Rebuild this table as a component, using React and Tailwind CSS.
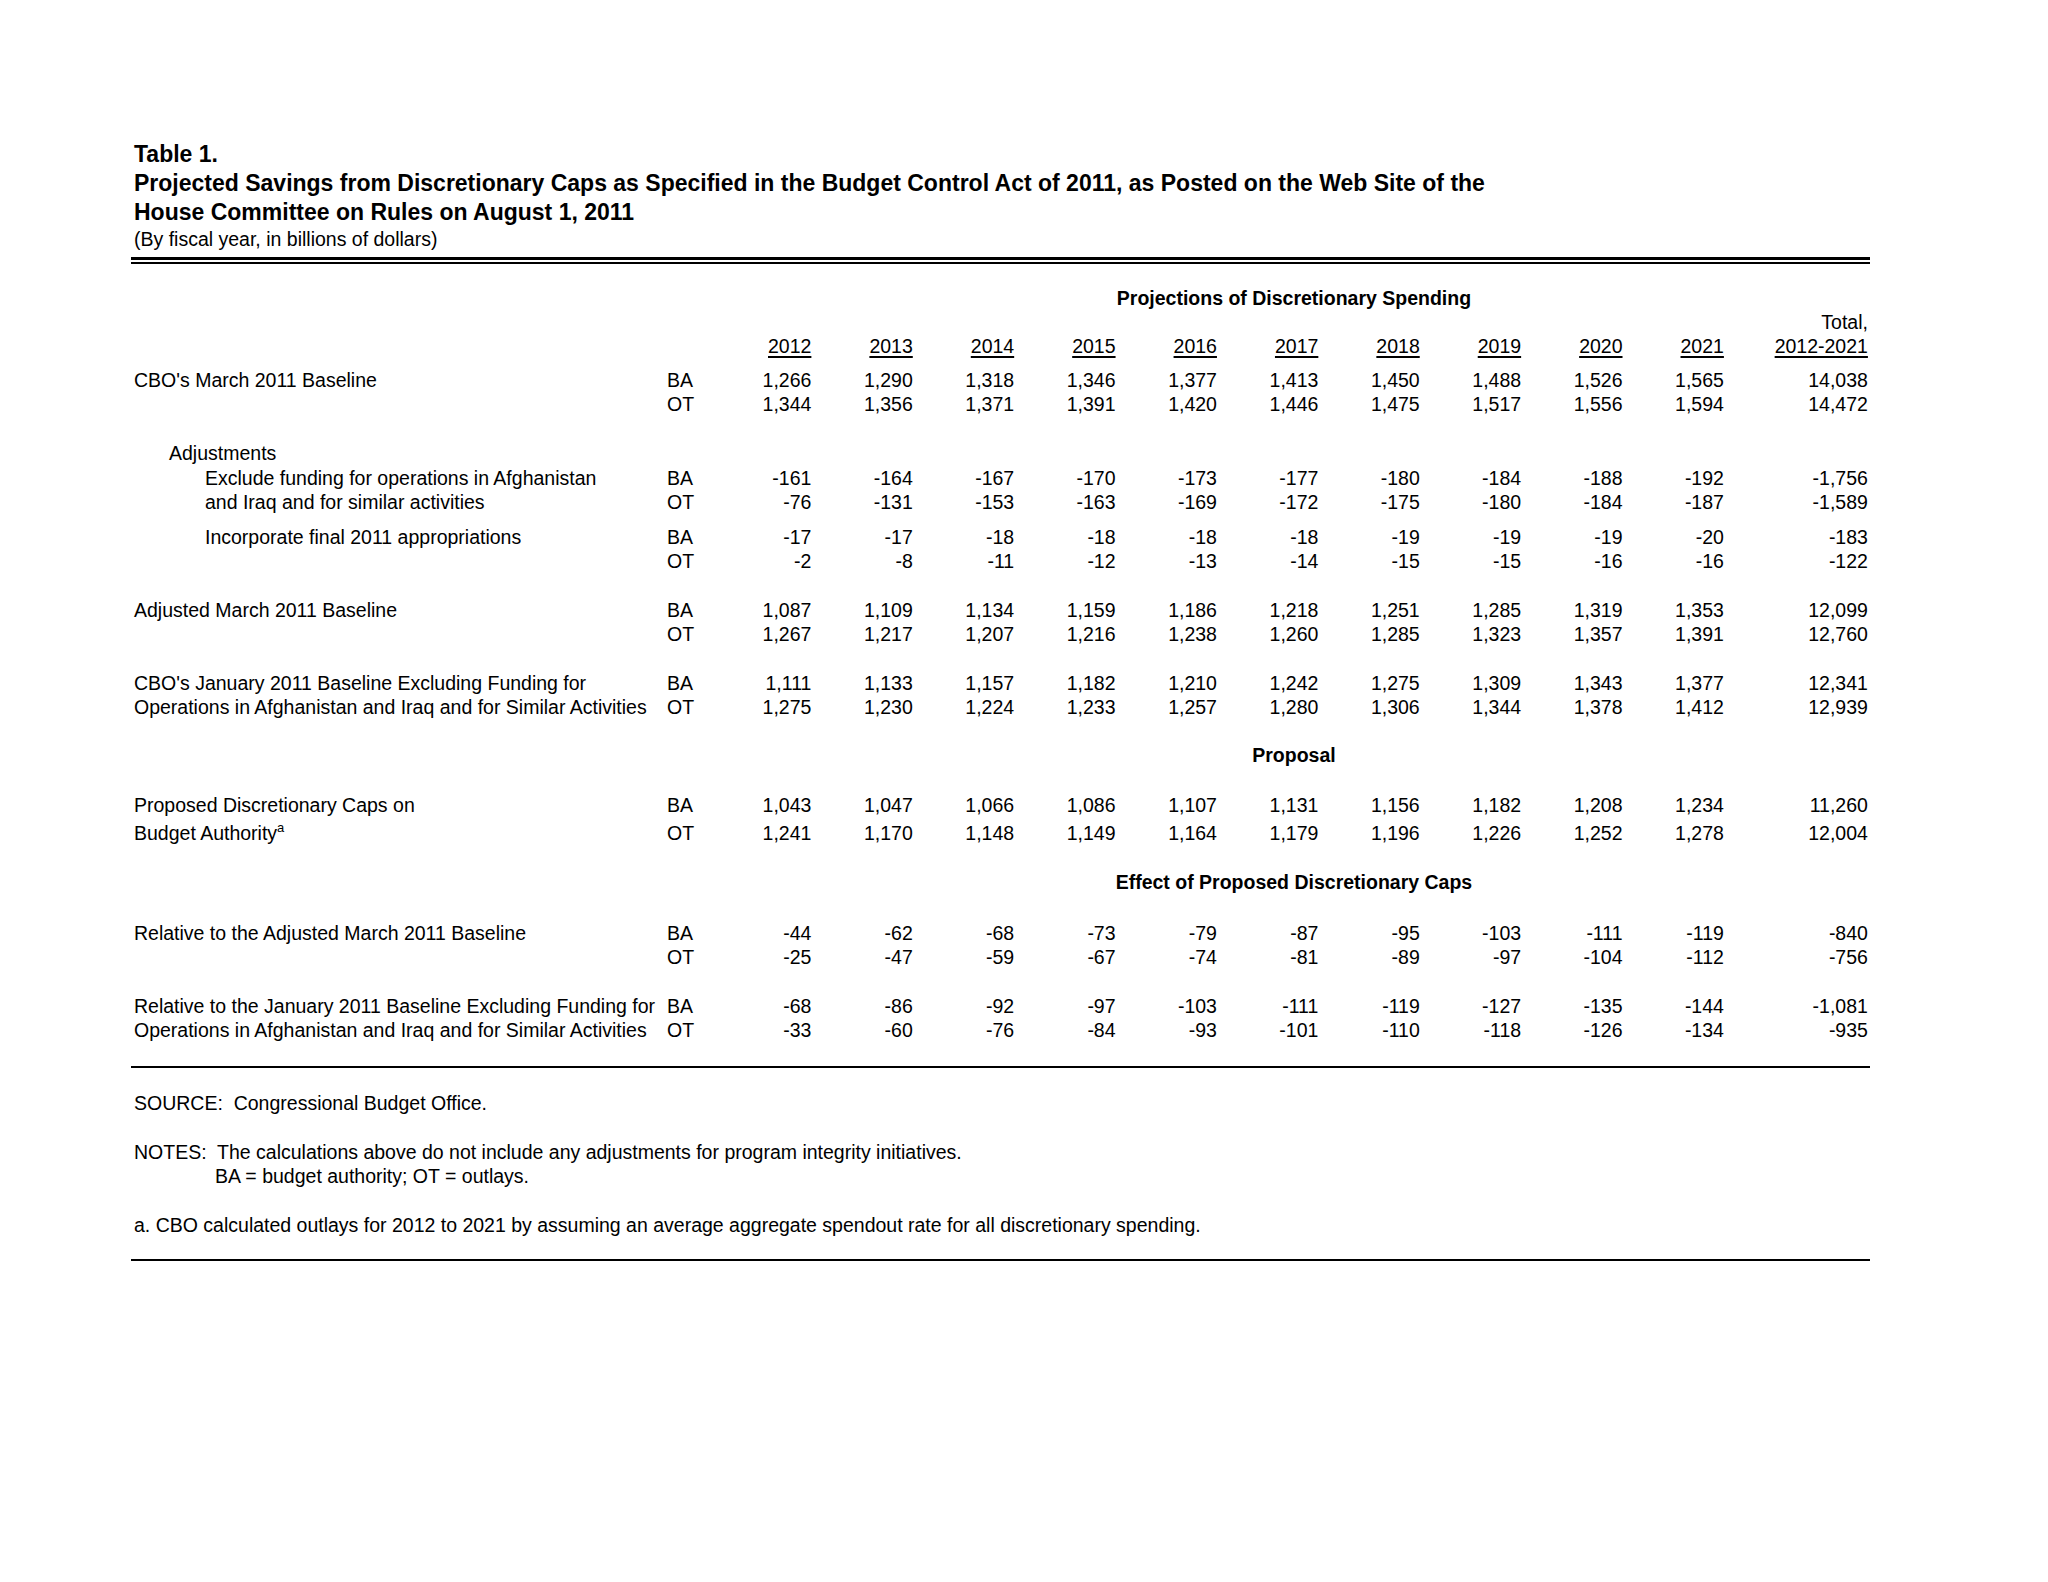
import React from 'react';

const years = ['2012', '2013', '2014', '2015', '2016', '2017', '2018', '2019', '2020', '2021'];

// each line: [label, tag, values..., total]
const lines = [
  { mt: 'mt-[10px]', label: "CBO's March 2011 Baseline", tag: 'BA', vals: ['1,266', '1,290', '1,318', '1,346', '1,377', '1,413', '1,450', '1,488', '1,526', '1,565', '14,038'] },
  { mt: '', label: '', tag: 'OT', vals: ['1,344', '1,356', '1,371', '1,391', '1,420', '1,446', '1,475', '1,517', '1,556', '1,594', '14,472'] },
  { mt: 'mt-[25px]', label: 'Adjustments', indent: 'pl-[35px]', tag: '', vals: [] },
  { mt: 'mt-px', label: 'Exclude funding for operations in Afghanistan', indent: 'pl-[71px]', tag: 'BA', vals: ['-161', '-164', '-167', '-170', '-173', '-177', '-180', '-184', '-188', '-192', '-1,756'] },
  { mt: '', label: 'and Iraq and for similar activities', indent: 'pl-[71px]', tag: 'OT', vals: ['-76', '-131', '-153', '-163', '-169', '-172', '-175', '-180', '-184', '-187', '-1,589'] },
  { mt: 'mt-[11px]', label: 'Incorporate final 2011 appropriations', indent: 'pl-[71px]', tag: 'BA', vals: ['-17', '-17', '-18', '-18', '-18', '-18', '-19', '-19', '-19', '-20', '-183'] },
  { mt: '', label: '', tag: 'OT', vals: ['-2', '-8', '-11', '-12', '-13', '-14', '-15', '-15', '-16', '-16', '-122'] },
  { mt: 'mt-[25px]', label: 'Adjusted March 2011 Baseline', tag: 'BA', vals: ['1,087', '1,109', '1,134', '1,159', '1,186', '1,218', '1,251', '1,285', '1,319', '1,353', '12,099'] },
  { mt: '', label: '', tag: 'OT', vals: ['1,267', '1,217', '1,207', '1,216', '1,238', '1,260', '1,285', '1,323', '1,357', '1,391', '12,760'] },
  { mt: 'mt-[25px]', label: "CBO's January 2011 Baseline Excluding Funding for", tag: 'BA', vals: ['1,111', '1,133', '1,157', '1,182', '1,210', '1,242', '1,275', '1,309', '1,343', '1,377', '12,341'] },
  { mt: '', label: 'Operations in Afghanistan and Iraq and for Similar Activities', tag: 'OT', vals: ['1,275', '1,230', '1,224', '1,233', '1,257', '1,280', '1,306', '1,344', '1,378', '1,412', '12,939'] },
  { mt: 'mt-[24px]', heading: 'Proposal' },
  { mt: 'mt-[26px]', label: 'Proposed Discretionary Caps on', tag: 'BA', vals: ['1,043', '1,047', '1,066', '1,086', '1,107', '1,131', '1,156', '1,182', '1,208', '1,234', '11,260'] },
  { mt: 'mt-[4px]', label: 'Budget Authority', sup: 'a', tag: 'OT', vals: ['1,241', '1,170', '1,148', '1,149', '1,164', '1,179', '1,196', '1,226', '1,252', '1,278', '12,004'] },
  { mt: 'mt-[25px]', heading: 'Effect of Proposed Discretionary Caps' },
  { mt: 'mt-[27px]', label: 'Relative to the Adjusted March 2011 Baseline', tag: 'BA', vals: ['-44', '-62', '-68', '-73', '-79', '-87', '-95', '-103', '-111', '-119', '-840'] },
  { mt: '', label: '', tag: 'OT', vals: ['-25', '-47', '-59', '-67', '-74', '-81', '-89', '-97', '-104', '-112', '-756'] },
  { mt: 'mt-[25px]', label: 'Relative to the January 2011 Baseline Excluding Funding for', tag: 'BA', vals: ['-68', '-86', '-92', '-97', '-103', '-111', '-119', '-127', '-135', '-144', '-1,081'] },
  { mt: '', label: 'Operations in Afghanistan and Iraq and for Similar Activities', tag: 'OT', vals: ['-33', '-60', '-76', '-84', '-93', '-101', '-110', '-118', '-126', '-134', '-935'] },
];

const gridCols = 'grid grid-cols-[533px_43px_repeat(10,101.4px)_144px] h-[24px] leading-[24px]';

const Line = ({ line }) => {
  if (line.heading) {
    return (
      <div className={`${gridCols} ${line.mt}`}>
        <div className="col-start-3 col-end-14 pl-[10px] text-center font-bold">{line.heading}</div>
      </div>
    );
  }
  return (
    <div className={`${gridCols} ${line.mt}`}>
      <div className={`whitespace-nowrap ${line.indent || ''}`}>
        {line.label}
        {line.sup && <sup className="text-[13px] relative -top-[1px] align-super leading-none">{line.sup}</sup>}
      </div>
      <div>{line.tag}</div>
      {line.vals.map((v, i) => (
        <div key={i} className="text-right">{v}</div>
      ))}
    </div>
  );
};

const App = () => {
  return (
    <div className="min-h-[1582px] w-full bg-white text-black font-['Liberation_Sans',Arial,sans-serif]">
      <div className="ml-[131px] w-[1739px] pt-[140px]">
        {/* Title */}
        <div className="pl-[3px]">
          <div className="text-[23px] leading-[29px] font-bold">
            <div>Table 1.</div>
            <div>Projected Savings from Discretionary Caps as Specified in the Budget Control Act of 2011, as Posted on the Web Site of the</div>
            <div>House Committee on Rules on August 1, 2011</div>
          </div>
          <div className="text-[19.5px] leading-[24px]">(By fiscal year, in billions of dollars)</div>
        </div>
        <div className="mt-[6px] h-[3px] bg-black" />
        <div className="mt-[2px] h-[2px] bg-black" />

        {/* Table */}
        <div className="pl-[3px] text-[19.5px]">
          <div className={`${gridCols} mt-[22px]`}>
            <div className="col-start-3 col-end-14 pl-[10px] text-center font-bold">Projections of Discretionary Spending</div>
          </div>
          <div className={gridCols}>
            <div className="col-start-13 text-right">Total,</div>
          </div>
          <div className={gridCols}>
            <div />
            <div />
            {years.map((y) => (
              <div key={y} className="text-right">
                <span className="underline decoration-[2px] underline-offset-[3px]">{y}</span>
              </div>
            ))}
            <div className="text-right">
              <span className="underline decoration-[2px] underline-offset-[3px]">2012-2021</span>
            </div>
          </div>
          {lines.map((line, i) => (
            <Line key={i} line={line} />
          ))}
        </div>

        <div className="mt-[24px] h-[2px] bg-black" />

        {/* Notes */}
        <div className="pl-[3px] text-[19.5px] leading-[24px]">
          <div className="mt-[23px] whitespace-pre">SOURCE:  Congressional Budget Office.</div>
          <div className="mt-[25px] whitespace-pre">NOTES:  The calculations above do not include any adjustments for program integrity initiatives.</div>
          <div className="pl-[81px]">BA = budget authority; OT = outlays.</div>
          <div className="mt-[25px]">a. CBO calculated outlays for 2012 to 2021 by assuming an average aggregate spendout rate for all discretionary spending.</div>
        </div>
        <div className="mt-[22px] h-[2px] bg-black" />
      </div>
    </div>
  );
};

export default App;
